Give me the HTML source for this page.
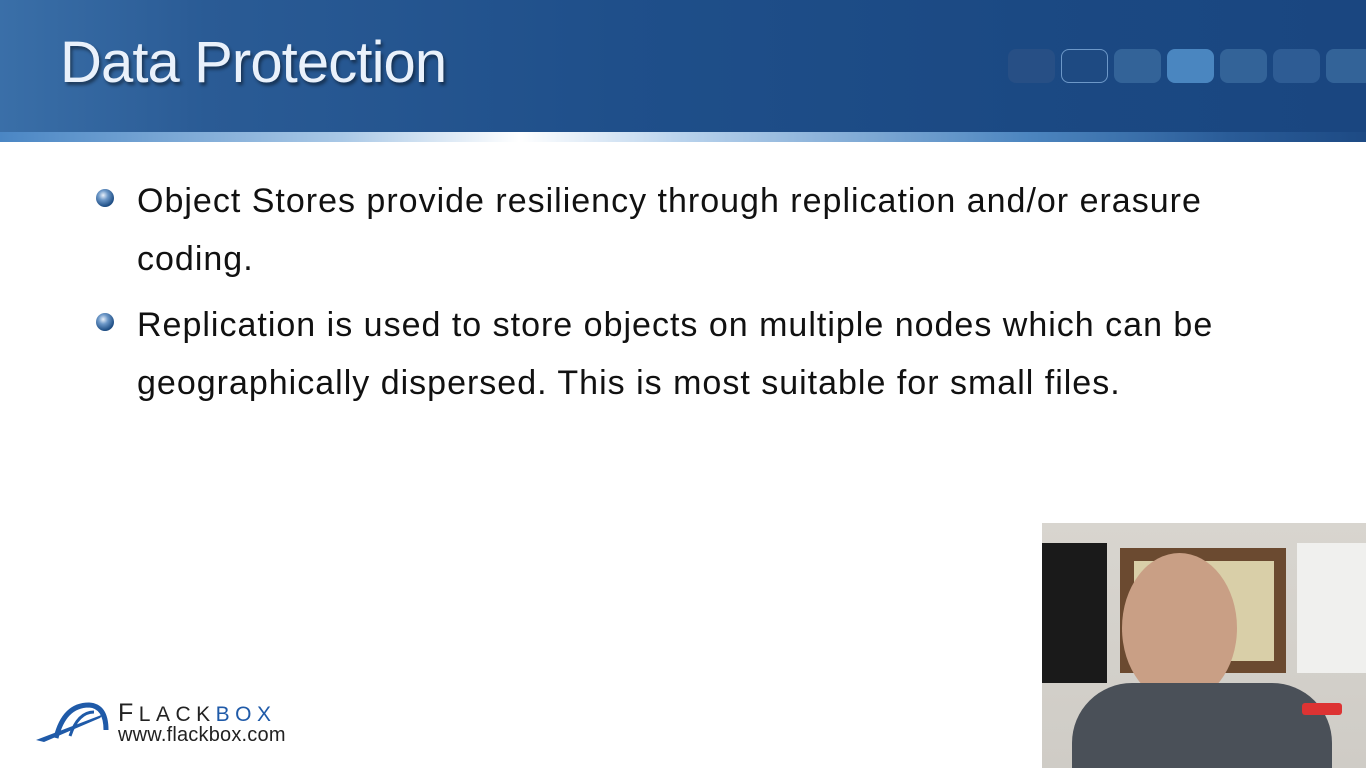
<!DOCTYPE html>
<html><head><meta charset="utf-8"><style>
body{margin:0;width:1366px;height:768px;overflow:hidden;background:#fff;position:relative;font-family:"Liberation Sans",sans-serif}
.banner{position:absolute;left:0;top:0;width:1366px;height:132px;background:linear-gradient(90deg,#3a6fa8 0%,#2a5b95 15%,#1f4f8a 45%,#1b4983 75%,#1a4680 100%)}
.strip{position:absolute;left:0;top:132px;width:1366px;height:10px;background:linear-gradient(90deg,#4a86c4 0%,#a9c8e6 25%,#ffffff 38%,#b8d2ec 50%,#4d86c0 75%,#2a5c98 90%,#1d4a84 100%)}
.title{position:absolute;left:60px;top:29px;color:#e9f1fb;font-size:58px;letter-spacing:-0.9px;text-shadow:2px 3px 3px rgba(0,0,0,.45)}
.sq{position:absolute;top:49px;width:47px;height:34px;border-radius:8px;background:#2e5c94}
.txt{position:absolute;left:137px;font-size:34px;letter-spacing:1.0px;color:#111;line-height:58px;white-space:nowrap}
.b{position:absolute;left:96px;width:18px;height:18px;border-radius:50%;background:radial-gradient(circle at 40% 35%,#e8f0fa 0,#6d98c8 30%,#1f4f86 70%,#0d2d55 100%)}
.video{position:absolute;left:1042px;top:523px;width:324px;height:245px;overflow:hidden;background:linear-gradient(180deg,#d8d5cf,#cfccc6)}
</style></head><body>
<div class="banner"></div><div class="strip"></div>
<div class="title">Data Protection</div>
<div class="sq" style="left:1008px;background:#274f85"></div>
<div class="sq" style="left:1061px;background:#1e4a82;border:1.5px solid #6d98c8;box-sizing:border-box"></div>
<div class="sq" style="left:1114px;background:#336398"></div>
<div class="sq" style="left:1167px;background:#4a86c0"></div>
<div class="sq" style="left:1220px;background:#336398"></div>
<div class="sq" style="left:1273px;background:#2e5c94"></div>
<div class="sq" style="left:1326px;background:#336398"></div>
<div class="b" style="top:189px"></div>
<div class="txt" style="top:172px">Object Stores provide resiliency through replication and/or erasure<br>coding.</div>
<div class="b" style="top:313px"></div>
<div class="txt" style="top:296px">Replication is used to store objects on multiple nodes which can be<br>geographically dispersed. This is most suitable for small files.</div>
<svg style="position:absolute;left:34px;top:700px" width="80" height="45"><path d="M2 40 L70 14 L66 18 L10 42Z" fill="#1f5aa8"/><path d="M22 38 Q30 5 55 5 Q72 6 72 30" stroke="#1f5aa8" stroke-width="5" fill="none"/><path d="M36 36 Q44 12 60 12" stroke="#1f5aa8" stroke-width="3" fill="none"/></svg>
<div style="position:absolute;left:118px;top:700px;font-size:25px;letter-spacing:5.5px;color:#222;line-height:26px">F<span style="font-size:21px">LACK</span><span style="color:#1f5aa8;font-size:21px">BOX</span></div>
<div style="position:absolute;left:118px;top:724px;font-size:20px;color:#222;letter-spacing:0.2px">www.flackbox.com</div>
<div class="video">
<div style="position:absolute;left:0;top:20px;width:65px;height:140px;background:#1a1a1a"></div>
<div style="position:absolute;left:78px;top:25px;width:166px;height:125px;background:#6b4a30"></div>
<div style="position:absolute;left:92px;top:38px;width:140px;height:100px;background:#d9cfa8"></div>
<div style="position:absolute;left:255px;top:20px;width:69px;height:130px;background:#f0f0ee"></div>
<div style="position:absolute;left:80px;top:30px;width:115px;height:150px;border-radius:50%;background:#c99f85"></div>
<div style="position:absolute;left:30px;top:160px;width:260px;height:120px;border-radius:60px 60px 0 0;background:#4a5058"></div>
<div style="position:absolute;left:260px;top:180px;width:40px;height:12px;background:#d33;border-radius:3px"></div>
</div>
</body></html>
